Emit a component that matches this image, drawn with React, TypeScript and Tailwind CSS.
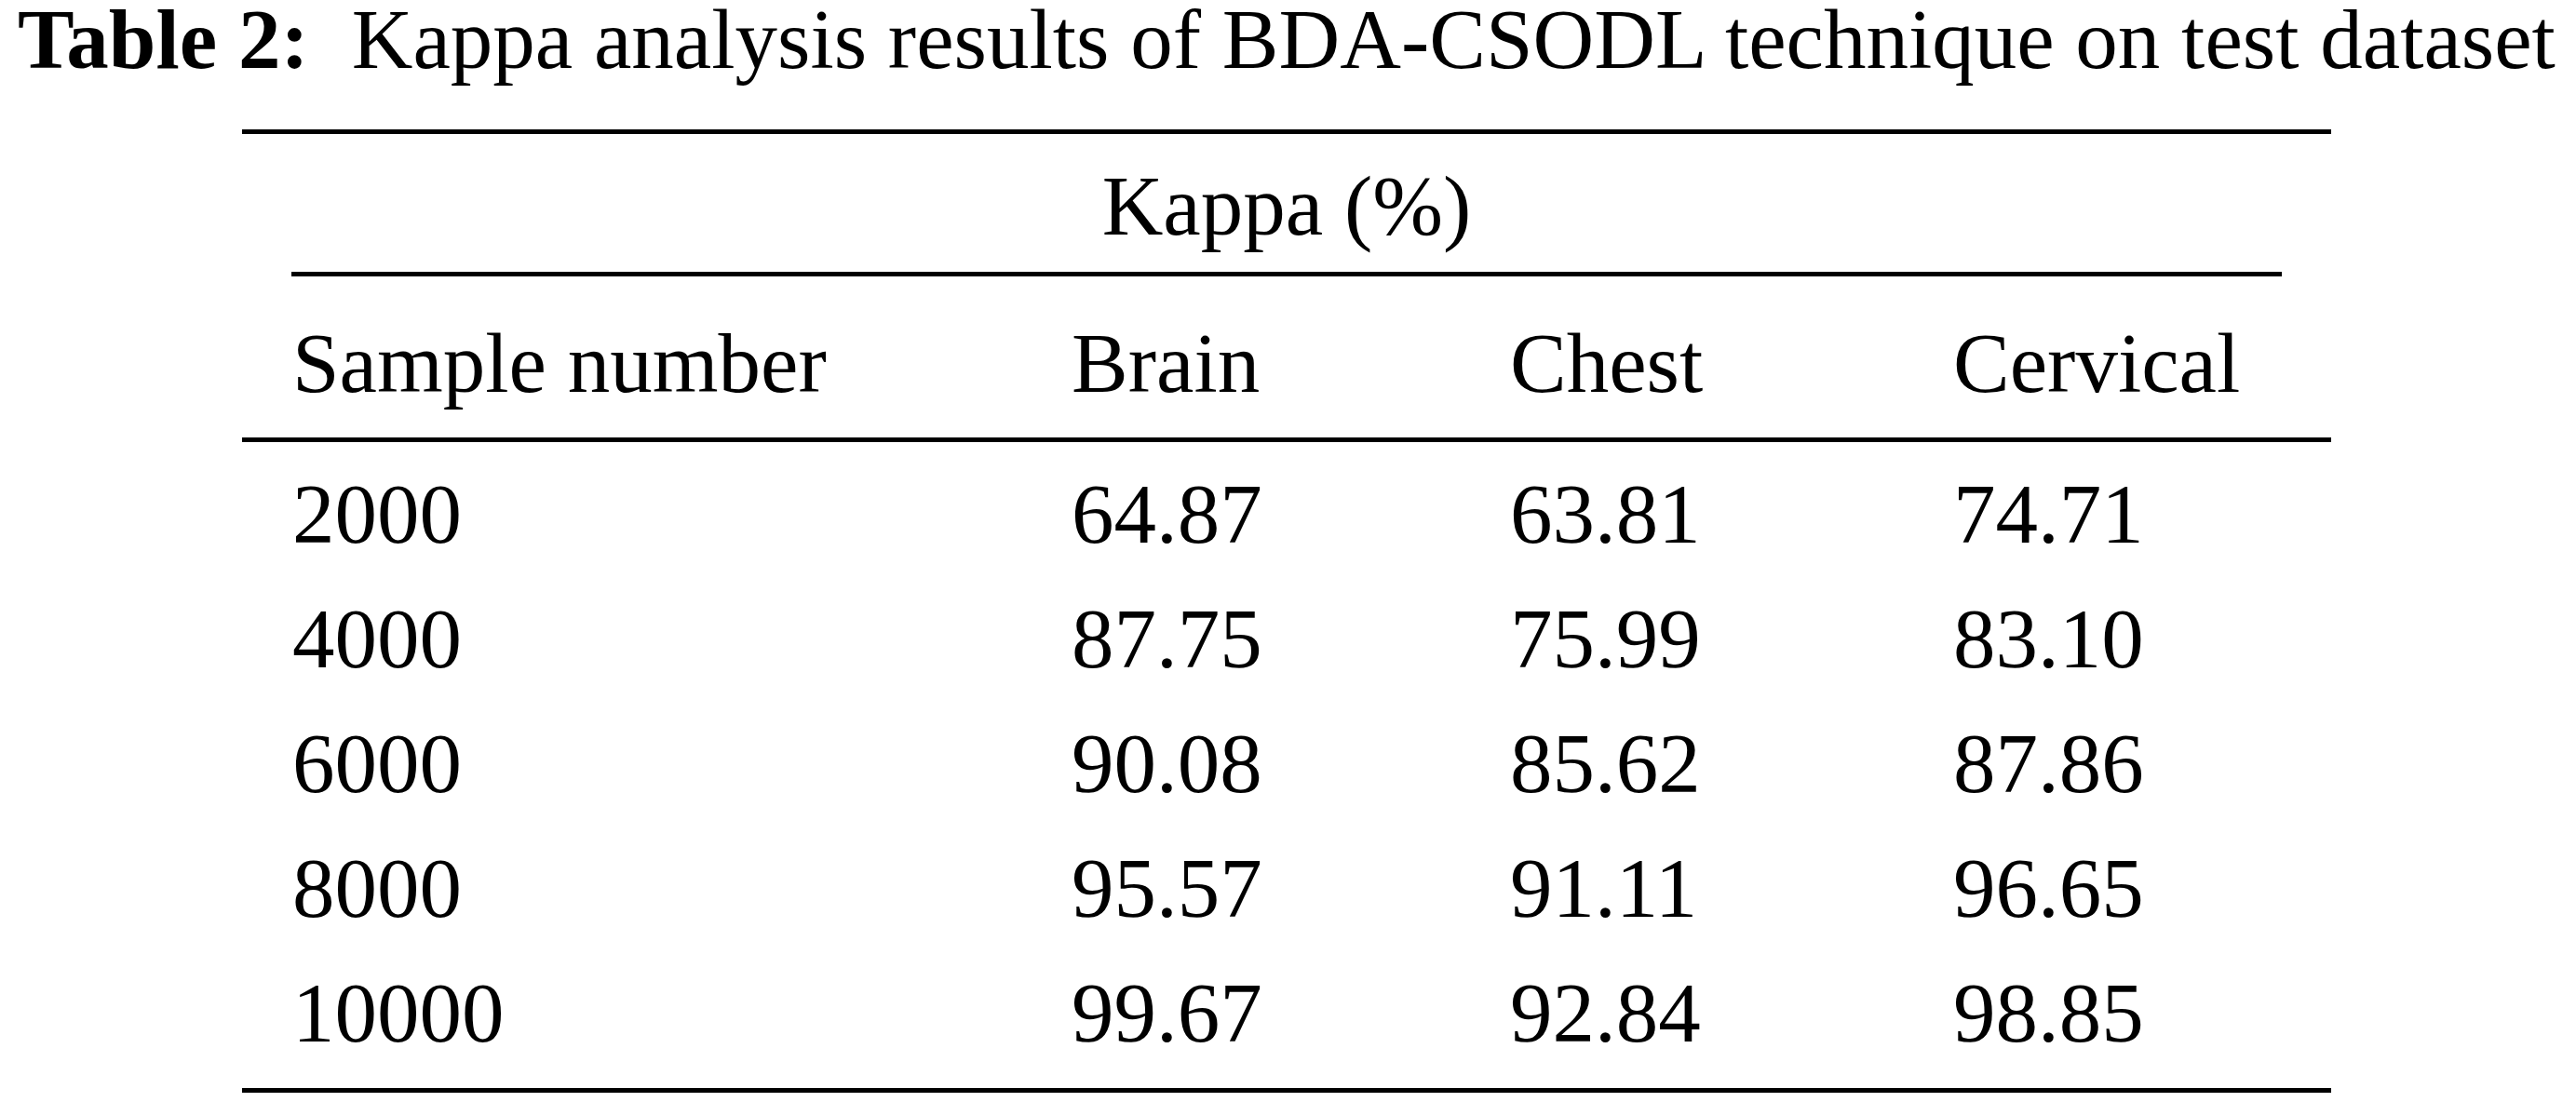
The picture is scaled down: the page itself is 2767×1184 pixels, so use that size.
import React from 'react';

const rows = [
    ['2000', '64.87', '63.81', '74.71'],
    ['4000', '87.75', '75.99', '83.10'],
    ['6000', '90.08', '85.62', '87.86'],
    ['8000', '95.57', '91.11', '96.65'],
    ['10000', '99.67', '92.84', '98.85'],
];

const cols = 'grid grid-cols-[837px_471px_476px_1fr] pl-[54px]';

export default function App() {
    return (
        <div className="min-h-screen bg-white text-black font-['Liberation_Serif','Times_New_Roman',serif] text-[91px]">
            {/* caption */}
            <div className="pl-[19px] leading-[86px] whitespace-nowrap">
                <span className="font-bold">Table 2:</span>
                <span className="ml-[46px]">Kappa analysis results of BDA-CSODL technique on test dataset</span>
            </div>

            <div className="ml-[260px] w-[2244px] mt-[53px] border-t-[5px] border-black leading-[90px]">
                <div className="pt-[33px] pb-[25px] text-center">Kappa (%)</div>
                <div className="mx-[53px] h-[5px] bg-black" />
                <div className={`${cols} pt-[49px] pb-[34px] border-b-[5px] border-black`}>
                    <div>Sample number</div>
                    <div>Brain</div>
                    <div>Chest</div>
                    <div>Cervical</div>
                </div>
                <div className="flex flex-col gap-[44px] pt-[33px] pb-[35px] border-b-[5px] border-black">
                    {rows.map((r) => (
                        <div key={r[0]} className={cols}>
                            {r.map((v, i) => (
                                <div key={i}>{v}</div>
                            ))}
                        </div>
                    ))}
                </div>
            </div>
        </div>
    );
}
